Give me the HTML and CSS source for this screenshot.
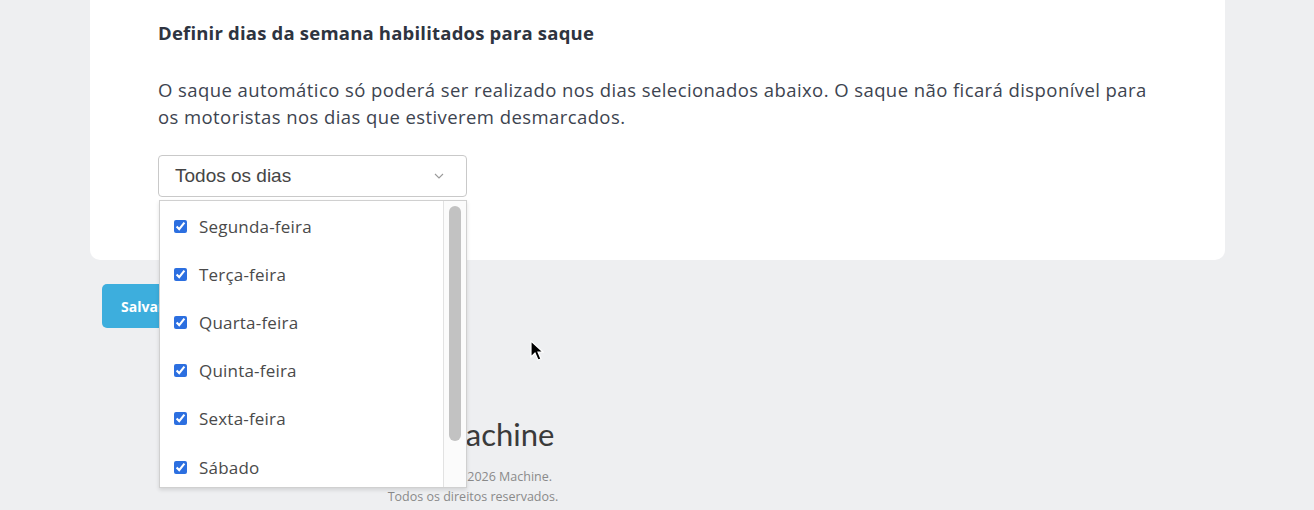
FILE: index.html
```html
<!DOCTYPE html>
<html lang="pt-BR">
<head>
<meta charset="UTF-8">
<meta name="viewport" content="width=device-width, initial-scale=1.0">
<title>Configurações de saque</title>
    <link rel="stylesheet" href="styles.css">
</head>
<body>
    <div class="page">
        <div class="card">
            <h3 class="card-title">Definir dias da semana habilitados para saque</h3>
            <p class="card-text">O saque automático só poderá ser realizado nos dias selecionados abaixo. O saque não ficará disponível para os motoristas nos dias que estiverem desmarcados.</p>

            <div class="multiselect">
                <div class="select-box">
                    <span>Todos os dias</span>
                    <svg class="chevron" width="10" height="6" viewBox="0 0 10 6"><path d="M1 1l4 4 4-4" fill="none" stroke="#9a9a9a" stroke-width="1.1"/></svg>
                </div>
                <!-- lista aberta -->
                <div class="options">
                    <div class="option-list">
                        <label class="option"><input type="checkbox" checked> Segunda-feira</label>
                        <label class="option"><input type="checkbox" checked> Terça-feira</label>
                        <label class="option"><input type="checkbox" checked> Quarta-feira</label>
                        <label class="option"><input type="checkbox" checked> Quinta-feira</label>
                        <label class="option"><input type="checkbox" checked> Sexta-feira</label>
                        <label class="option"><input type="checkbox" checked> Sábado</label>
                    </div>
                    <div class="scroll-track"><div class="scroll-thumb"></div></div>
                </div>
            </div>
        </div>

        <button class="btn-save">Salvar</button>

        <div class="footer">
            <div class="logo">
                <svg width="36" height="30" viewBox="0 0 36 30"><path d="M3 27V5l15 13L33 5v22" fill="none" stroke="#444" stroke-width="4"/></svg>
                <span>Machine</span>
            </div>
            <div class="copy">Copyright © 2026 Machine.</div>
            <div class="copy">Todos os direitos reservados.</div>
        </div>
    </div>

    <svg class="cursor" width="14" height="22" viewBox="0 0 14 22"><path d="M1 1v16l4-4 3 7 3-1-3-7h5z" fill="#000" stroke="#fff" stroke-width="1.2"/></svg>
</body>
</html>
```

FILE: styles.css
```css
body{
    margin: 0;
    background: #eeeff1;
    font-family: "Open Sans", "Noto Sans", sans-serif;
    color: #3d4450;
}
.page{
    width: 1135px;
    margin-left: 90px;
}
.card{
    background: #fff;
    border-radius: 0 0 10px 10px;
    padding: 21px 68px 63px 68px;
}
.card-title{
    margin: 0;
    font-size: 18.5px;
    letter-spacing: 0.2px;
    line-height: 24px;
    font-weight: bold;
    color: #2e3440;
}
.card-text{
    margin: 31px 0 0 0;
    font-size: 18.5px;
    letter-spacing: 0.42px;
    line-height: 27px;
    width: 1000px;
}

.multiselect{
    position: relative;
    width: 309px;
    margin-top: 25px;
}
.select-box{
    height: 40px;
    border: 1px solid #c9c9c9;
    border-radius: 4px;
    display: flex;
    align-items: center;
    justify-content: space-between;
    padding: 0 22px 0 16px;
    font-family: "Liberation Sans", Arial, sans-serif;
    font-size: 19px;
    color: #454545;
}
.options{
    position: absolute;
    top: 45px;
    left: 1px;
    width: 308px;
    height: 288px;
    box-sizing: border-box;
    border: 1px solid #d0d0d0;
    background: #fff;
    box-shadow: 0 2px 4px rgba(0,0,0,0.12);
    overflow: hidden;
    z-index: 5;
}
.option-list{
    padding-top: 1px;
    margin-right: 23px;
}
.option{
    display: flex;
    align-items: center;
    height: 48.2px;
    padding-left: 14px;
    font-size: 17px;
    letter-spacing: 0.2px;
    color: #4a4a4a;
}
.option input{
    width: 13px;
    height: 13px;
    margin: 0 12px 0 0;
    accent-color: #2c6fe0;
}
/* barra de rolagem desenhada por cima da lista */
.scroll-track{
    position: absolute;
    top: 0;
    right: 0;
    bottom: 0;
    width: 22px;
    background: #fbfbfb;
    border-left: 1px solid #e2e2e2;
}
.scroll-thumb{
    position: absolute;
    top: 5px;
    left: 5px;
    width: 12px;
    height: 235px;
    border-radius: 6px;
    background: #c2c2c2;
}

.btn-save{
    margin: 24px 0 0 12px;
    height: 44px;
    padding: 0 19px;
    border: none;
    border-radius: 5px;
    background: #3daedd;
    color: #fff;
    font-family: "Open Sans", sans-serif;
    font-weight: bold;
    font-size: 14px;
}

.footer{
    width: 766px;
    margin-top: 86px;
    text-align: center;
}
.logo{
    display: flex;
    justify-content: center;
    align-items: center;
    gap: 10px;
    height: 40px;
    font-family: "Lato", sans-serif;
    font-size: 31px;
    color: #3a3a3a;
}
.copy{
    font-size: 12.5px;
    line-height: 20px;
    color: #8a8a8a;
}
.logo + .copy{
    margin-top: 13px;
}

.cursor{
    position: absolute;
    left: 530px;
    top: 340px;
}
```
